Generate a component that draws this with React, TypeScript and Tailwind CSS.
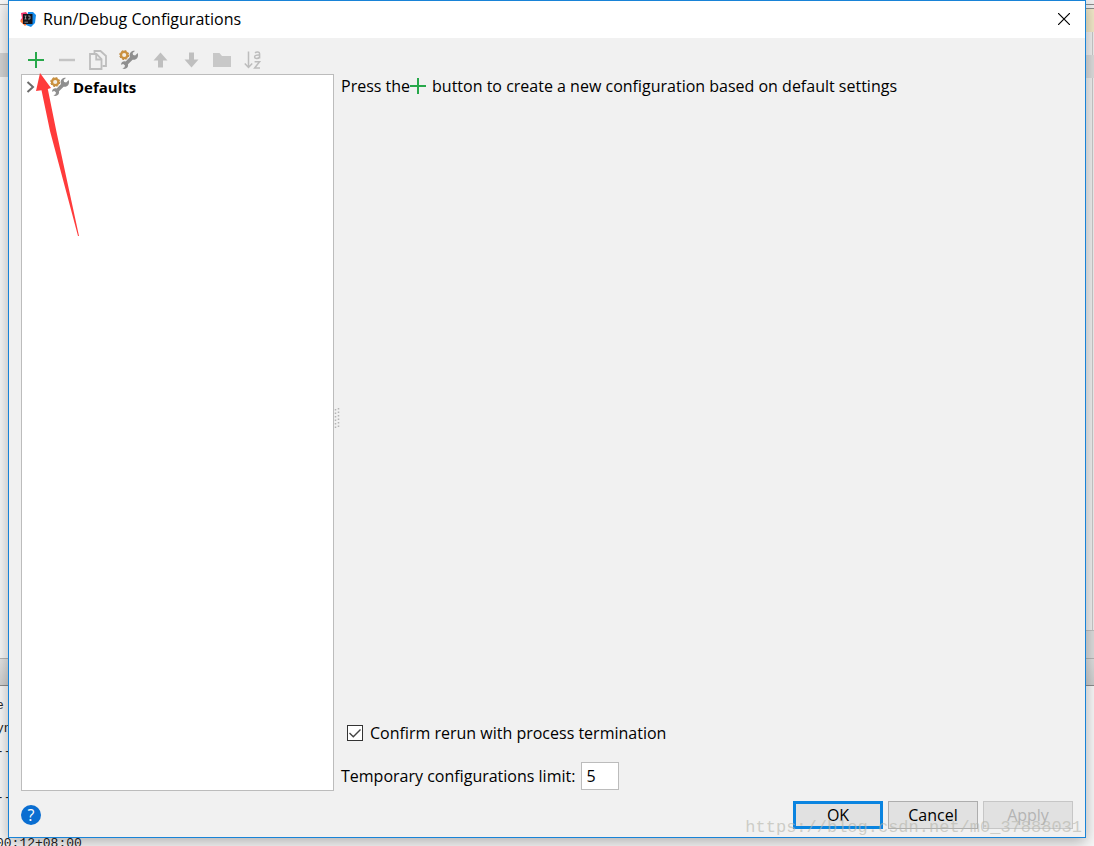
import React from 'react';

interface IconProps {
  className?: string;
}

const PlusIcon: React.FC<IconProps> = ({ className = '' }) => (
  <svg viewBox="0 0 16 16" className={`h-4 w-4 ${className}`} aria-hidden="true">
    <path d="M8 0v16M0 8h16" stroke="#27a84a" strokeWidth="2" />
  </svg>
);

const MinusIcon = () => (
  <svg viewBox="0 0 16 16" className="h-4 w-4" aria-hidden="true">
    <path d="M0 8h16" stroke="#c4c4c4" strokeWidth="2.4" />
  </svg>
);

const CopyIcon = () => (
  <svg viewBox="0 0 20 20" className="h-5 w-5" fill="none" stroke="#bdbdbd" strokeWidth="1.8" aria-hidden="true">
    <path d="M6.500 3.500V1h6L18 6v10h-3.500" />
    <path d="M2 4h6.500L13.500 9v10H2z" fill="#f1f1f1" />
    <path d="M8.200 4.500v5h5" />
  </svg>
);

const WrenchIcon = () => (
  <svg viewBox="0 0 20 20" className="h-5 w-5" fill="none" aria-hidden="true">
    <path
      d="M18.800 3l-2.700 2.600-2-.5-.5-2 2.300-2.200C13 .6 10.500 2.600 10.700 5.400c0 .7.1 1.200.3 1.700L6.700 11.400C4 10.700 1.900 12.400 2 14.800l2.300-.9 1.700 1.500-.6 2-2 .9c2.500 1.700 6-.1 5.700-3.200l-.1-.9 4.600-4.500c3.600.8 6.300-2.200 5.200-6.700z"
      fill="#8f8f8f"
    />
    <circle cx="5.200" cy="5" r="3.200" fill="#f4efe6" stroke="#cb913f" strokeWidth="2.300" />
    <circle cx="5.200" cy="5" r="4.500" stroke="#bb8235" strokeWidth="1" strokeDasharray="2 1.53" />
  </svg>
);

const UpIcon = () => (
  <svg viewBox="0 0 16 16" className="h-4 w-4" fill="#bfbfbf" aria-hidden="true">
    <path d="M8.500 .5L15.500 8.500H11v7H6v-7H1.500z" />
  </svg>
);

const DownIcon = () => (
  <svg viewBox="0 0 16 16" className="h-4 w-4" fill="#bfbfbf" aria-hidden="true">
    <path d="M8.500 15.500L1.500 7.500H6v-7h5v7h4.500z" />
  </svg>
);

const FolderIcon = () => (
  <svg viewBox="0 0 20 16" className="h-4 w-5" fill="#c8c8c8" aria-hidden="true">
    <path d="M1 1h6.500l2.500 3h9v11H1z" />
  </svg>
);

const SortIcon = () => (
  <svg viewBox="0 0 18 20" className="h-5 w-5" fill="none" stroke="#bdbdbd" strokeWidth="1.500" aria-hidden="true">
    <path d="M4.500 1.500v16M.8 13.500l3.700 4 3.700-4" />
    <path d="M11 2.800c1.800-1.400 4.600-1 4.600 1v4.700M15.600 5.200c-3-.3-5 .2-5 1.700 0 2 3.700 2.200 5 .1" />
    <path d="M10.600 11.700h5l-5 6.300h5.400" />
  </svg>
);

const IdeIcon = () => (
  <svg viewBox="0 0 16 16" className="h-4 w-4" aria-hidden="true">
    <path d="M1 2l5-1 3 4-3 9-4-2-1.500-3L2 7z" fill="#f0356b" />
    <path d="M0 10l3-2 4 5-2 2z" fill="#f77a3c" />
    <path d="M8 1h5l3 3-1 8-4 4-5-2z" fill="#168bea" />
    <path d="M3 3h9.500v10H3z" fill="#15131a" />
    <path d="M4.500 5h2M5.500 5v3M4.500 8h2M8 5h2v3H8M4.500 11.200h3.500" stroke="#bbb" strokeWidth=".7" fill="none" />
  </svg>
);

const CloseIcon = () => (
  <svg viewBox="0 0 12 12" className="h-3 w-3" aria-hidden="true">
    <path d="M0 0l12 12M12 0L0 12" stroke="#000" strokeWidth="1.200" />
  </svg>
);

const tools = [
  { label: 'Add New Configuration', icon: <PlusIcon /> },
  { label: 'Remove Configuration', icon: <MinusIcon />, disabled: true },
  { label: 'Copy Configuration', icon: <CopyIcon />, disabled: true },
  { label: 'Edit Defaults', icon: <WrenchIcon /> },
  { label: 'Move Up', icon: <UpIcon />, disabled: true },
  { label: 'Move Down', icon: <DownIcon />, disabled: true },
  { label: 'Create New Folder', icon: <FolderIcon />, disabled: true },
  { label: 'Sort Configurations', icon: <SortIcon />, disabled: true }
];

const logLines = ['e', 'yn', '--', '', '--', '', '00:12+08:00'];

// Main editor window, mostly covered by the dialog
const Backdrop = () => (
  <div className="col-start-1 row-start-1 flex h-screen justify-between overflow-hidden bg-[#f8f8f8]" aria-hidden="true">
    <div className="flex grow flex-col">
      <div className="h-[5px] shrink-0 border-b border-[#a0a0a0]" />
      <div className="h-12 shrink-0 bg-[#f4f4f4]" />
      <div className="h-6 shrink-0 bg-[#d2d2d2]" />
      <div className="grow" />
      <div className="h-7 shrink-0 border-y border-t-[#b4b4b4] border-b-[#8c8c8c] bg-linear-to-b from-[#e4e4e4] to-[#d0d0d0]" />
      <div className="-ml-1 h-40 shrink-0 pt-2 font-['Liberation_Mono',monospace] text-[13px] leading-[23px] text-[#222]">
        {logLines.map((line, index) => (
          <div key={index} className="h-[23px] whitespace-pre">
            {line}
          </div>
        ))}
      </div>
    </div>
    <div className="flex w-2 flex-col bg-[#f0f0f0]">
      <div className="h-[9px] shrink-0 border-b border-[#8c8c8c]">
        <div className="h-[5px] border-b border-[#8c8c8c]" />
      </div>
      <div className="h-[23px] shrink-0 bg-[#f2e8c8]" />
      <div className="mr-px h-[23px] shrink-0 border-r border-[#c8c8c8]" />
      <div className="h-[23px] shrink-0 bg-[#dcdcdc]" />
      <div className="mr-px grow border-r border-[#c8c8c8]" />
      <div className="h-7 shrink-0 border-t border-[#c0c0c0] bg-[#dcdcdc]" />
      <div className="h-7 shrink-0 border-y border-t-[#b4b4b4] border-b-[#8c8c8c] bg-linear-to-b from-[#dedede] to-[#cecece]" />
      <div className="h-40 shrink-0 bg-[#f8f8f8]" />
    </div>
  </div>
);

const TitleBar = () => (
  <header className="flex h-[37px] shrink-0 items-center bg-white pr-[15px] pb-0.5 pl-[11px]">
    <IdeIcon />
    <h1 className="ml-[7px] grow">Run/Debug Configurations</h1>
    <button type="button" aria-label="Close">
      <CloseIcon />
    </button>
  </header>
);

const Toolbar = () => (
  <div role="toolbar" className="flex h-9 shrink-0 pt-2 pl-[11px]">
    {tools.map(({ label, icon, disabled }) => (
      <button
        key={label}
        type="button"
        aria-label={label}
        disabled={disabled}
        className="flex h-7 w-[31px] items-center justify-center"
      >
        {icon}
      </button>
    ))}
  </div>
);

const ConfigurationTree = () => (
  <div role="tree" className="w-[313px] shrink-0 border border-[#bcbcbc] bg-white">
    <div role="treeitem" aria-expanded="false" className="flex h-6 items-center pl-1">
      <svg viewBox="0 0 10 12" className="h-3 w-[10px]" aria-hidden="true">
        <path d="M1.500 1L7 6l-5.500 5" fill="none" stroke="#6b6b6b" strokeWidth="2" />
      </svg>
      <span className="ml-3.5">
        <WrenchIcon />
      </span>
      <span className="ml-[3px] text-[15px] font-bold">Defaults</span>
    </div>
  </div>
);

const Splitter = () => (
  <div role="separator" aria-orientation="vertical" className="flex w-[7px] shrink-0 items-center pb-[30px]">
    <svg viewBox="0 0 6 20" className="h-5 w-1.5" aria-hidden="true">
      <path d="M1.500 1v19M4.500 0v19" stroke="#b5b5b5" strokeWidth="1.500" strokeDasharray="1.500 2" />
    </svg>
  </div>
);

const Details = () => (
  <main className="flex grow flex-col pb-px">
    <p className="flex h-6 items-center">
      Press the
      <PlusIcon className="mr-1.5" />
      button to create a new configuration based on default settings
    </p>
    <div className="grow" />
    <label className="flex h-6 items-center gap-[7px] pl-1.5">
      <span className="grid h-4 w-4">
        <input
          type="checkbox"
          defaultChecked
          className="peer col-start-1 row-start-1 h-4 w-4 appearance-none border border-[#333] bg-white"
        />
        <svg
          viewBox="0 0 16 16"
          className="pointer-events-none invisible col-start-1 row-start-1 h-4 w-4 peer-checked:visible"
          aria-hidden="true"
        >
          <path d="M2.500 8l3.800 3.800L13.500 4.500" fill="none" stroke="#444" strokeWidth="1.400" />
        </svg>
      </span>
      Confirm rerun with process termination
    </label>
    <div className="mt-[17px] flex items-center gap-1.5">
      <label htmlFor="limit">Temporary configurations limit:</label>
      <input id="limit" defaultValue="5" className="h-7 w-[38px] border border-[#bcbcbc] bg-white px-1" />
    </div>
  </main>
);

const Footer = () => (
  <footer className="flex h-[46px] shrink-0 items-center gap-[5px] px-3 pt-0.5">
    <button type="button" aria-label="Help" className="flex h-5 w-5 items-center justify-center rounded-full bg-[#0a6ed1] text-white">
      ?
    </button>
    <div className="grow" />
    <button type="button" className="h-7 w-[90px] border-3 border-[#0a84e0] bg-[#e1e1e1] leading-none">
      OK
    </button>
    <button type="button" className="h-7 w-[90px] border border-[#adadad] bg-[#e1e1e1] leading-none">
      Cancel
    </button>
    <button type="button" disabled className="h-7 w-[90px] border border-[#c6c6c6] bg-[#e1e1e1] leading-none text-[#b4b4b4]">
      Apply
    </button>
  </footer>
);

const PointerArrow = () => (
  <svg viewBox="0 0 44 164" className="pointer-events-none absolute top-[73px] left-9 z-20 h-[164px] w-11" aria-hidden="true">
    <path d="M4 0L15 15l-3.200 1 8.500 42L43 163h-1L14 58 5.500 17.300 0 18z" fill="#ff3b3b" />
  </svg>
);

export default function App() {
  return (
    <div className="relative grid h-screen grid-cols-1 grid-rows-1 overflow-hidden font-['Open_Sans','Noto_Sans',sans-serif] text-base leading-5 text-black">
      <Backdrop />
      <div
        role="dialog"
        className="z-10 col-start-1 row-start-1 mr-2 mb-2 ml-2 flex flex-col border border-[#1883d7] bg-[#f1f1f1] shadow-[0_4px_14px_rgba(0,0,0,0.3)]"
      >
        <TitleBar />
        <Toolbar />
        <div className="flex min-h-0 grow pl-3">
          <ConfigurationTree />
          <Splitter />
          <Details />
        </div>
        <Footer />
      </div>
      <div className="pointer-events-none absolute right-3 bottom-2 z-20 font-['Liberation_Mono',monospace] text-[17px] text-[#b4b4aa]/60">
        https://blog.csdn.net/m0_37888031
      </div>
      <PointerArrow />
    </div>
  );
}
